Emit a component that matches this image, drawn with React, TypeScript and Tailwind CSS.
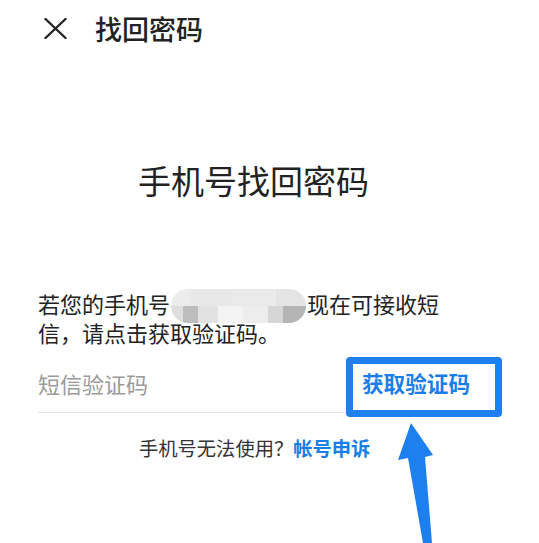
import React from "react";

const font = { fontFamily: '"Noto Sans CJK SC", "Noto Sans", sans-serif' };

export default function App() {
  return (
    <div className="relative w-[539px] h-[543px] bg-white overflow-hidden text-[#222]" style={font}>
      {/* Header */}
      <div className="h-[57px] flex items-center">
        <svg className="ml-[44px]" width="23" height="21" viewBox="0 0 23 21">
          <path d="M1.5 1 L21.5 20 M21.5 1 L1.5 20" stroke="#222" strokeWidth="2.4" strokeLinecap="round" fill="none" />
        </svg>
        <span className="ml-[28px] text-[27px] leading-[34px] font-medium">找回密码</span>
      </div>

      {/* Heading */}
      <div className="mt-[103px] pl-[138px] text-[33px] leading-[40px] whitespace-nowrap">手机号找回密码</div>

      {/* Paragraph */}
      <div className="mt-[89px] pl-[38px] text-[22px] leading-[29px] whitespace-nowrap">
        若您的手机号
        <span className="inline-flex flex-col w-[135px] h-[34px] rounded-full overflow-hidden align-middle -my-[8px] mx-[1px] relative -top-[1px]">
          <span className="flex h-[17px]">
            <span className="w-[20px] bg-[#ececec]" />
            <span className="w-[40px] bg-[#e8e8e8]" />
            <span className="w-[45px] bg-[#eaeaea]" />
            <span className="flex-1 bg-[#e4e4e4]" />
          </span>
          <span className="flex h-[17px]">
            <span className="w-[12px] bg-[#dedede]" />
            <span className="w-[15px] bg-[#bdbdbd]" />
            <span className="w-[20px] bg-[#e2e2e2]" />
            <span className="w-[25px] bg-[#f3f3f3]" />
            <span className="w-[25px] bg-[#ededed]" />
            <span className="w-[15px] bg-[#d6d6d6]" />
            <span className="flex-1 bg-[#b4b4b4]" />
          </span>
        </span>
        现在可接收短
        <br />
        信，请点击获取验证码。
      </div>

      {/* Input row */}
      <div className="mt-[12px] ml-[38px] mr-[39px] h-[54px] pb-[4px] flex items-center border-b border-[#e3e3e3]">
        <span className="text-[22px] text-[#9a9a9a]">短信验证码</span>
        <span className="ml-auto mr-[30px] text-[21.6px] font-bold text-[#1a7ee8]">获取验证码</span>
      </div>

      {/* Footer */}
      <div className="mt-[22px] pl-[139px] text-[19.3px] leading-[26px] whitespace-nowrap text-[#333]">
        手机号无法使用？<span className="font-bold text-[#1a7ee8]">帐号申诉</span>
      </div>

      {/* Annotation box */}
      <div className="absolute left-[346px] top-[357px] w-[156px] h-[60px] border-[7px] border-[#1e80ee] rounded-[4px]" />

      {/* Annotation arrow */}
      <svg className="absolute left-0 top-0" width="539" height="543" viewBox="0 0 539 543">
        <path d="M411 423 L433 455 L425 457 L432 543 L423 543 L408 458 L398 460 Z" fill="#1e80ee" />
      </svg>
    </div>
  );
}
